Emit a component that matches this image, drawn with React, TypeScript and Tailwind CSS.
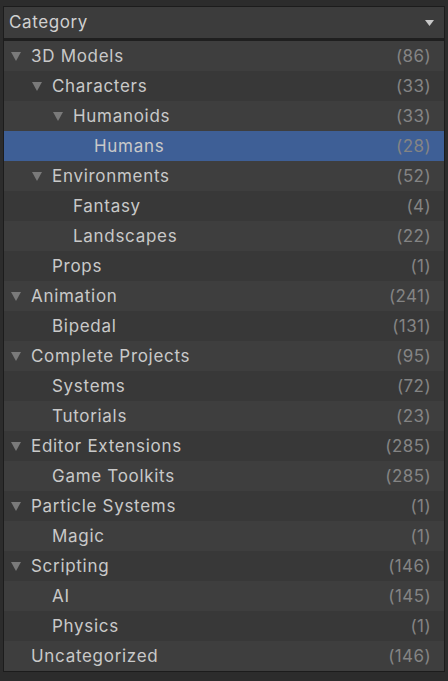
type Item = {
  label: string
  count: number
  depth: number
  open?: boolean
  selected?: boolean
}

const items: Item[] = [
  { label: "3D Models", count: 86, depth: 0, open: true },
  { label: "Characters", count: 33, depth: 1, open: true },
  { label: "Humanoids", count: 33, depth: 2, open: true },
  { label: "Humans", count: 28, depth: 3, selected: true },
  { label: "Environments", count: 52, depth: 1, open: true },
  { label: "Fantasy", count: 4, depth: 2 },
  { label: "Landscapes", count: 22, depth: 2 },
  { label: "Props", count: 1, depth: 1 },
  { label: "Animation", count: 241, depth: 0, open: true },
  { label: "Bipedal", count: 131, depth: 1 },
  { label: "Complete Projects", count: 95, depth: 0, open: true },
  { label: "Systems", count: 72, depth: 1 },
  { label: "Tutorials", count: 23, depth: 1 },
  { label: "Editor Extensions", count: 285, depth: 0, open: true },
  { label: "Game Toolkits", count: 285, depth: 1 },
  { label: "Particle Systems", count: 1, depth: 0, open: true },
  { label: "Magic", count: 1, depth: 1 },
  { label: "Scripting", count: 146, depth: 0, open: true },
  { label: "AI", count: 145, depth: 1 },
  { label: "Physics", count: 1, depth: 1 },
  { label: "Uncategorized", count: 146, depth: 0 },
]

// arrow sits 21px further right per level
const indents = ["pl-[7px]", "pl-[28px]", "pl-[49px]", "pl-[70px]"]

function Arrow() {
  return (
    <svg width="10" height="9" viewBox="0 0 10 9" className="shrink-0">
      <path d="M0 0 L10 0 L5 9 Z" fill="#7a7a7a" />
    </svg>
  )
}

function Row({ item, index }: { item: Item; index: number }) {
  const bg = item.selected
    ? "bg-[#3e5f96]"
    : index % 2 === 0
      ? "bg-[#3e3e3e]"
      : "bg-[#383838]"

  return (
    <div className={`flex h-[30px] items-center pr-[13px] ${bg}`}>
      <div className={`flex flex-1 items-center gap-[10px] ${indents[item.depth]}`}>
        {item.open ? <Arrow /> : <span className="w-[10px] shrink-0" />}
        <span className="tracking-[0.7px] text-[#c9c9c9]">{item.label}</span>
      </div>
      <span className="tracking-[0.4px] text-[#848484]">({item.count})</span>
    </div>
  )
}

export default function App() {
  return (
    <div
      className="h-[681px] w-[448px] bg-[#2c2c2c] px-[3px] pt-[6px] text-[17px] leading-none"
      style={{ fontFamily: "Inter, 'Noto Sans', sans-serif" }}
    >
      <div className="border border-[#1c1c1c] bg-[#1f1f1f]">
        {/* Header dropdown */}
        <div className="flex h-[31px] items-center justify-between bg-[#3c3c3c] pl-[5px] pr-[10px]">
          <span className="tracking-[0.6px] text-[#d0d0d0]">Category</span>
          <svg width="9" height="6" viewBox="0 0 9 6">
            <path d="M0 0 L9 0 L4.5 6 Z" fill="#c8c8c8" />
          </svg>
        </div>

        {/* Tree list */}
        <div className="mt-[3px]">
          {items.map((item, i) => (
            <Row key={item.label} item={item} index={i} />
          ))}
        </div>
      </div>
    </div>
  )
}
